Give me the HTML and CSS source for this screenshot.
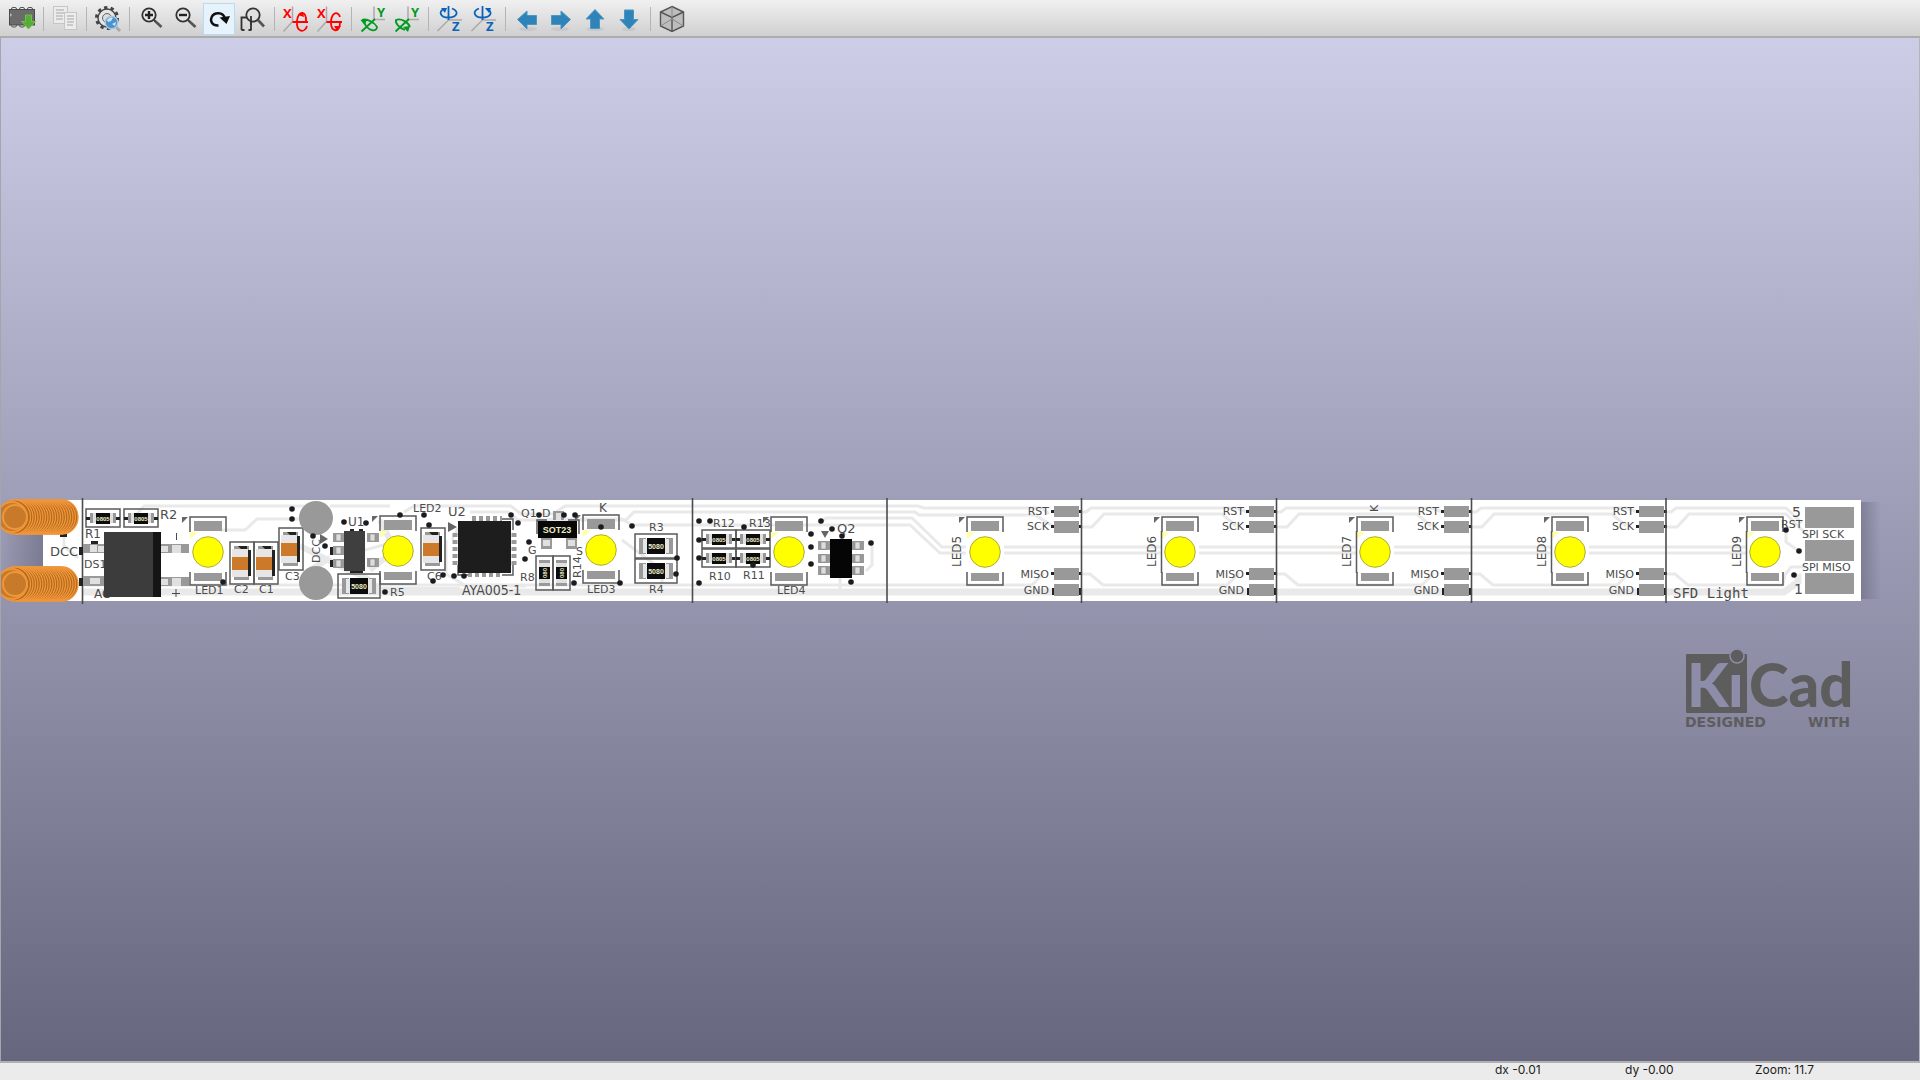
FILE: index.html
```html
<!DOCTYPE html>
<html lang="en">
<head>
  <meta charset="UTF-8">
  <title>3D Viewer</title>
  <link rel="stylesheet" href="styles.css">
</head>
<body>
  <div class="toolbar" role="toolbar">
    <button type="button" aria-label="Reload board">
      <svg viewBox="0 0 32 32"><g fill="none" stroke="#555"><rect x="5.5" y="4.5" width="5" height="5" rx="1.5"/><rect x="13.5" y="4.5" width="5" height="5" rx="1.5"/><rect x="21.5" y="4.5" width="5" height="5" rx="1.5"/><rect x="5.5" y="19" width="5" height="5" rx="1.5"/><rect x="13.5" y="19" width="5" height="5" rx="1.5"/></g><rect x="3.5" y="6.5" width="25" height="15.5" fill="#6b6b6b" stroke="#4a4a4a"/><path d="M4 10l2 2-2 2" fill="#bbb"/><path d="M19.5 12h6v6.5h4l-7 7.500-7-7.500h4z" fill="#56ad35" stroke="#6fc04d"/></svg>
    </button>
    <span class="sep"></span>
    <button type="button" aria-label="Copy image">
      <svg viewBox="0 0 32 32"><g fill="#ececec" stroke="#c6c6c6"><rect x="4.5" y="3.5" width="14" height="17"/><rect x="15.5" y="9.5" width="12" height="17"/></g><path d="M7 7h8M7 10h8M7 13h7M7 16h7M18 13h7M18 16h7M18 19h7M18 22h6" stroke="#bdbdbd" stroke-width="1.5"/></svg>
    </button>
    <span class="sep"></span>
    <button type="button" aria-label="Render settings">
      <svg viewBox="0 0 32 32"><circle cx="15" cy="15" r="10.5" fill="none" stroke="#444" stroke-width="3" stroke-dasharray="3.3 3.3"/><circle cx="15" cy="15" r="9" fill="#e6e6e6" stroke="#444" stroke-width="1.4"/><circle cx="15" cy="15" r="4.5" fill="#ddd" stroke="#666"/><path d="M23 23l5 5" stroke="#aaa" stroke-width="3"/><circle cx="19.5" cy="19.5" r="6.3" fill="#4b93cc" stroke="#a9c9e2" stroke-width="1.4"/><path d="M15 17q3-4 6-2l-2 3-3 1zM20 21l4-2-1 4z" fill="#cfe4f4"/></svg>
    </button>
    <span class="sep"></span>
    <button type="button" aria-label="Zoom in">
      <svg viewBox="0 0 32 32"><circle cx="14" cy="12" r="6.7" fill="#e6e6e6" stroke="#333" stroke-width="1.8"/><path d="M19 17l2 2" stroke="#333" stroke-width="2"/><path d="M20.5 18.5l6 5.5" stroke="#555" stroke-width="2.6"/><path d="M10 12h8M14 8v8" stroke="#222" stroke-width="2.4"/></svg>
    </button>
    <button type="button" aria-label="Zoom out">
      <svg viewBox="0 0 32 32"><circle cx="14" cy="12" r="6.7" fill="#e6e6e6" stroke="#333" stroke-width="1.8"/><path d="M19 17l2 2" stroke="#333" stroke-width="2"/><path d="M20.5 18.5l6 5.5" stroke="#555" stroke-width="2.6"/><path d="M10 12h8" stroke="#222" stroke-width="2.4"/></svg>
    </button>
    <button type="button" class="active" aria-label="Redraw">
      <svg viewBox="0 0 32 32"><path d="M15.5 22.5C9 23 7 18 8.5 14.5C10.5 9 20.5 8 22 16" fill="none" stroke="#111" stroke-width="2.4"/><path d="M16.5 14.5l10.5-1.5-3.5 8z" fill="#111"/></svg>
    </button>
    <button type="button" aria-label="Zoom to fit">
      <svg viewBox="0 0 32 32"><path d="M4.5 27V14.5h9.5V27M4.5 27h3M11.5 27h3" fill="none" stroke="#333" stroke-width="1.8"/><circle cx="16" cy="12" r="6.7" fill="#e0e0e0" stroke="#333" stroke-width="1.8"/><path d="M14 13v9" stroke="#333" stroke-width="1.8"/><path d="M21 17l6 6.5" stroke="#555" stroke-width="2.6"/></svg>
    </button>
    <span class="sep"></span>
    <button type="button" aria-label="Rotate X clockwise">
      <svg viewBox="0 0 32 32"><path d="M12.5 3.5v15l-9 10" class="axis"/><text x="3" y="15" class="axis-x">X</text><path d="M12.5 19H28M26 19c1-12-8-12-9-1c-1 12 8 12 10 5" class="rot red"/><path d="M18 12l5-3 1 5z" fill="#f00"/></svg>
    </button>
    <button type="button" aria-label="Rotate X counterclockwise">
      <svg viewBox="0 0 32 32"><path d="M12.5 3.5v15l-9 10" class="axis"/><text x="3" y="15" class="axis-x">X</text><path d="M12.5 19H28M26 14c-2-6-8-5-9 4c-1 12 9 12 9 2" class="rot red"/><path d="M20 23l7 0-4 5z" fill="#f00"/></svg>
    </button>
    <span class="sep"></span>
    <button type="button" aria-label="Rotate Y clockwise">
      <svg viewBox="0 0 32 32"><path d="M17 3.5v13h11" class="axis"/><text x="20" y="14" class="axis-y">Y</text><path d="M18 16L4.5 28.5M5 17c5-2 13 3 15 7c0 5-9 5-13-5" class="rot green"/><path d="M3.5 17l7-1-3 6z" fill="#009a20"/></svg>
    </button>
    <button type="button" aria-label="Rotate Y counterclockwise">
      <svg viewBox="0 0 32 32"><path d="M17 3.5v13h11" class="axis"/><text x="20" y="14" class="axis-y">Y</text><path d="M18 16L4.5 28.5M14 27c-6-2-10-7-9-10c5-2 12 2 14 7" class="rot green"/><path d="M12 24l7-1-2 6z" fill="#009a20"/></svg>
    </button>
    <span class="sep"></span>
    <button type="button" aria-label="Rotate Z clockwise">
      <svg viewBox="0 0 32 32"><path d="M28 17H14.5L3.5 28" class="axis"/><text x="18" y="28" class="axis-z">Z</text><path d="M14.5 3v14M11 5.5c-8 3-4 9 3 9c9 0 12-6 4-9" class="rot blue"/><path d="M7 5l6 0-2 5z" fill="#0a62bb"/></svg>
    </button>
    <button type="button" aria-label="Rotate Z counterclockwise">
      <svg viewBox="0 0 32 32"><path d="M28 17H14.5L3.5 28" class="axis"/><text x="18" y="28" class="axis-z">Z</text><path d="M14.5 3v14M11 5.5c-8 3-4 9 3 9c9 0 12-6 4-9" class="rot blue"/><path d="M17 5l6 0-2 5z" fill="#0a62bb"/></svg>
    </button>
    <span class="sep"></span>
    <button type="button" aria-label="Move left">
      <svg viewBox="0 0 32 32"><ellipse cx="17" cy="26" rx="9" ry="2" class="soft"/><path d="M6.5 16.5L16 8v4.5h9.500v9H16V26z" class="arrow"/></svg>
    </button>
    <button type="button" aria-label="Move right">
      <svg viewBox="0 0 32 32"><ellipse cx="15" cy="26" rx="9" ry="2" class="soft"/><path d="M25.5 16.5L16 8v4.5H6.5v9H16V26z" class="arrow"/></svg>
    </button>
    <button type="button" aria-label="Move up">
      <svg viewBox="0 0 32 32"><ellipse cx="16" cy="26" rx="9" ry="2" class="soft"/><path d="M16 6.5L25 16h-4.5v9.500h-9V16H7z" class="arrow"/></svg>
    </button>
    <button type="button" aria-label="Move down">
      <svg viewBox="0 0 32 32"><ellipse cx="16" cy="26" rx="7" ry="2" class="soft"/><path d="M16 26L25 16.5h-4.5V7h-9v9.500H7z" class="arrow"/></svg>
    </button>
    <span class="sep"></span>
    <button type="button" aria-label="Orthographic projection">
      <svg viewBox="0 0 32 32"><path d="M16 3.5l11.5 5.5v14L16 28.5 4.5 23V9z" fill="#bdbdbd" stroke="#555" stroke-width="1.4"/><path d="M4.5 9L16 14.5 27.5 9M16 14.5v14" fill="none" stroke="#555" stroke-width="1.4"/><path d="M16 3.5v12M4.5 23L16 16l11.5 7" fill="none" stroke="#8a8a8a"/></svg>
    </button>
  </div>

  <main class="viewport">
    <svg class="scene" viewBox="1 38 1918 1023">
      <defs>
        <linearGradient id="shade"><stop offset="0" stop-color="#66667f" stop-opacity=".55"/><stop offset="1" stop-color="#66667f" stop-opacity="0"/></linearGradient>
        <linearGradient id="shadeL"><stop offset="0" stop-color="#66667f" stop-opacity="0"/><stop offset="1" stop-color="#66667f" stop-opacity=".6"/></linearGradient>
        <g id="led">
          <path d="M-18 -20V-35H18V-20M-18 20V33H18V20" class="silk"/>
          <path d="M-26 -35h6l-6 6z" fill="#666"/>
          <rect x="-14" y="-31" width="28" height="10" class="pad"/>
          <rect x="-14" y="21" width="28" height="8" class="pad"/>
          <path d="M-18 -20h8l-8 7z" fill="#ffffa8"/>
          <circle r="15.3" fill="#ff0" stroke="#8a8a20" stroke-width=".7"/>
        </g>
        <g id="cap">
          <rect x="-12" y="-21" width="24" height="42" class="silk"/>
          <rect x="-8" y="-17" width="15" height="34" class="pad"/>
          <rect x="-10" y="-14" width="16" height="28" fill="#e6e6e6"/>
          <path d="M6 -13h3v26h-3zM-4 -17h9v3h-6z" fill="#222"/>
          <rect x="-10" y="-6" width="16" height="13" fill="#cc7a29"/>
        </g>
        <g id="res">
          <rect x="-17" y="-9" width="34" height="18" class="silk"/>
          <path d="M-13 -5h6V5h-6zM7 -5h6V5h-6z" class="pad"/>
          <path d="M-10 -5h3V5h-3zM7 -5h3V5h-3z" fill="#e0e0e0"/>
          <rect x="-7" y="-5" width="14" height="11" fill="#0c0c0c"/>
          <path d="M-17 -1h4v3h-4zM13 -1h4v3h-4z" fill="#222"/>
          <text x="0" y="3" class="chip small">0805</text>
        </g>
        <g id="bigres">
          <rect x="-21" y="-12" width="42" height="24" class="silk"/>
          <path d="M-17 -8h7V8h-7zM10 -8h7V8h-7z" class="pad"/>
          <path d="M-13 -7h4V7h-4zM9 -7h4V7h-4z" fill="#e6e6e6"/>
          <rect x="-9" y="-8" width="18" height="16" fill="#0c0c0c"/>
          <text x="0" y="3" class="chip">5080</text>
        </g>
        <g id="vres">
          <rect x="-9" y="-17" width="17" height="34" class="silk"/>
          <path d="M-6 -13h11v26h-11z" class="pad"/>
          <path d="M-6 -10h11v20h-11z" fill="#e0e0e0"/>
          <rect x="-6" y="-6" width="11" height="12" fill="#0c0c0c"/>
          <text transform="rotate(-90)" x="0" y="2" class="chip small">080</text>
        </g>
        <g id="leg"><rect width="12" height="9" class="pad"/><rect x="3" y="1" width="5" height="7" fill="#ddd" stroke="#888" stroke-width=".6"/></g>
      </defs>

      <rect x="1861" y="502" width="20" height="97" fill="url(#shade)"/>
      <rect x="1" y="500" width="42" height="101" fill="url(#shadeL)"/>
      <rect x="43" y="500" width="1818" height="101" fill="#fff"/>

      <!-- copper under the mask -->
      <g class="track">
        <path d="M64 536v10l14 12M82 585H1032l12-12M130 522l14-16h104"/>
        <path d="M220 530h25l12-11h45M248 506h60M330 506h60M365 550l22-6M404 512l10-6h97l10 8h32l12-8h353l6 2h118l7 6"/>
        <path d="M470 512h38l10 8h108l8-8h281l4 3h116l18 11"/>
        <path d="M540 525l12-6h70l10 6h186l8-7h86l30 29h836M640 525h270l30 28h816"/>
        <path d="M452 540l6-12M446 540v34l20 12h60M840 578v14M872 545v20l-6 6M622 540l40 30v15"/>
        <path d="M380 520l15 30-25 20M300 546l40 20 26 12 14 12h80M310 570l20-12" stroke-width="6"/>
      </g>
      <path d="M82 592H1784l14-10v-8" fill="none" stroke="#e9e9e9" stroke-width="7"/>
      <g id="modules"></g>
      <path d="M1786 530v12l13 9" class="track"/>
      <path d="M82.500 498V604M692.500 498V603M887 498V603M1081.500 498V603M1276.500 498V603M1471.500 498V603M1666 498V603" stroke="#4c4c4c" stroke-width="1.6"/>

      <!-- bridge rectifier and input -->
      <path d="M60 533h7v4h-7zM79 547h4v8h-4zM79 578h4v8h-4zM91 541h7v4h-7z" fill="#222"/>
      <text x="50" y="556" class="t13">DCC</text>
      <g id="coils"></g>
      <use href="#res" x="103" y="518"/><use href="#res" x="141" y="518"/>
      <text x="160" y="519" class="t13">R2</text>
      <text x="85" y="538" class="t12">R1</text>
      <text x="84" y="568">DS1</text>
      <text x="94" y="598" class="t12">AC</text>
      <path d="M83 544h21v9h-21zM83 576h21v10h-21zM160 544h29v9h-29zM160 577h29v9h-29z" class="pad"/>
      <path d="M90 545h7v7h-7zM98 546h6v6h-6zM90 578h10v6h-10zM161 546h7v6h-7zM172 545h9v8h-9zM161 579h7v6h-7zM172 578h9v8h-9z" fill="#e0e0e0"/>
      <rect x="104" y="532" width="50" height="65" fill="#3c3c3c"/>
      <rect x="153" y="532" width="8" height="65" fill="#141414"/>
      <path d="M176.500 533v7M172 593.500h8M176 589v8" stroke="#4c4c4c"/>

      <use href="#led" x="208" y="552"/>
      <use href="#cap" x="242" y="563"/><use href="#cap" x="266" y="563"/><use href="#cap" x="291" y="549"/><use href="#cap" x="433" y="549"/>
      <text x="195" y="594">LED1</text>
      <text x="234" y="593">C2</text><text x="259" y="593">C1</text><text x="285" y="580">C3</text><text x="427" y="580">C6</text>
      <circle cx="316" cy="518" r="17" class="pad"/><circle cx="316" cy="583" r="17" class="pad"/>
      <text transform="translate(320 563) rotate(-90)">DCC</text>
      <path d="M320 534l8 5-8 5z" fill="#666"/>

      <!-- regulator -->
      <use href="#leg" x="333" y="533"/><use href="#leg" x="333" y="546"/><use href="#leg" x="333" y="559"/><use href="#leg" x="367" y="533"/><use href="#leg" x="367" y="558"/>
      <path d="M330 547h3v8h-3zM330 560h3v7h-3zM350 529h4v3h-4zM359 529h4v3h-4zM350 570h13v3h-13z" fill="#222"/>
      <rect x="344" y="531" width="21" height="40" fill="#3f3f3f"/>
      <text x="348" y="526" class="t12">U1</text>
      <use href="#bigres" x="359" y="586"/>
      <text x="390" y="596">R5</text>
      <use href="#led" x="398" y="551"/>
      <text x="413" y="512">LED2</text>

      <!-- controller -->
      <text x="448" y="516" class="t13">U2</text>
      <path d="M448 522l9 5-9 5z" fill="#666"/>
      <path d="M502 519h11v11M458 565v10h11M502 575h11v-11" class="silk"/>
      <path d="M472 519h30M468 574h34" stroke="#999" stroke-width="6" stroke-dasharray="4 3"/>
      <path d="M455 533v32M514 533v32" stroke="#999" stroke-width="5" stroke-dasharray="4 3"/>
      <rect x="458" y="521" width="53" height="52" fill="#1d1d1d"/>
      <text x="462" y="595" class="part">AYA005-1</text>

      <text x="521" y="517">Q1</text><text x="542" y="517">D</text><text x="528" y="554">G</text><text x="576" y="555">S</text>
      <path d="M537 534v-14h10M568 520h11v14" class="silk"/>
      <path d="M553 511h11v9h-11zM541 538h11v11h-11zM566 538h11v11h-11z" class="pad"/>
      <path d="M556 513h5v7h-5zM543 540h7v6h-7zM568 540h7v6h-7z" fill="#e0e0e0"/>
      <rect x="538" y="521" width="39" height="17" fill="#080808"/>
      <text x="557" y="533" class="chip sot">SOT23</text>
      <use href="#vres" x="545" y="573"/><use href="#vres" x="562" y="573"/>
      <text x="520" y="581">R8</text>
      <text transform="translate(581 578) rotate(-90)">R14</text>
      <use href="#led" x="601" y="550"/>
      <text x="599" y="512" class="t12">K</text>
      <text x="587" y="593">LED3</text>
      <use href="#bigres" x="656" y="546"/><use href="#bigres" x="656" y="571"/>
      <text x="649" y="531">R3</text><text x="649" y="593">R4</text>

      <use href="#res" x="719" y="539"/><use href="#res" x="753" y="539"/><use href="#res" x="719" y="558"/><use href="#res" x="753" y="558"/>
      <text x="713" y="527">R12</text><text x="749" y="527">R13</text><text x="709" y="580">R10</text><text x="743" y="579">R11</text>
      <use href="#led" x="789" y="552"/>
      <text x="777" y="594">LED4</text>
      <path d="M821 531h8l-4 7z" fill="#666"/>
      <use href="#leg" x="818" y="541"/><use href="#leg" x="818" y="554"/><use href="#leg" x="818" y="566"/><use href="#leg" x="852" y="541"/><use href="#leg" x="852" y="554"/><use href="#leg" x="852" y="566"/>
      <rect x="830" y="539" width="22" height="39" fill="#050505"/>
      <text x="837" y="533" class="t13">Q2</text>
      <g id="vias" fill="#1b1b22"></g>

      <!-- programming pads -->
      <path d="M1805 507h49v21h-49zM1805 540h49v21h-49zM1805 573h49v21h-49z" class="pad"/>
      <text x="1792" y="517" class="t14">5</text>
      <text x="1781" y="528">RST</text>
      <text x="1802" y="538">SPI SCK</text>
      <text x="1802" y="571">SPI MISO</text>
      <text x="1794" y="594" class="t14">1</text>
      <text x="1673" y="598" class="title">SFD Light</text>

      <g class="logo">
        <rect x="1686" y="654" width="61" height="59" rx="1"/>
        <text x="1687" y="707" class="brand cut">K</text>
        <text x="1728" y="707" class="brand cut">ı</text>
        <circle cx="1737" cy="656" r="7" stroke="#8e8da9" stroke-width="1.5"/>
        <text x="1749" y="707" class="brand">Cad</text>
        <text x="1685" y="727" class="made">DESIGNED</text>
        <text x="1850" y="727" class="made end">WITH</text>
      </g>
    </svg>
  </main>

  <footer class="statusbar">
    <span></span>
    <span>dx -0.01</span>
    <span>dy -0.00</span>
    <span>Zoom: 11.7</span>
  </footer>

  <script>
    // strip sections, one LED each
    const pitch = 195;
    let out = "";
    for (let i = 0; i < 5; i++) {
      const x = i * pitch;
      out += `<g transform="translate(${x} 0)">`;
      if (i > 0) {
        out += `<path class="track" d="M887 512h4l5-4h${i === 4 ? "110l16 15" : "145l12 4"}M887 527h10l12-13h${i === 4 ? "97l24 24" : "118l14 12"}M887 574h8l13 11h${i === 4 ? "95l2-10l6-8h16" : "124l12-12"}"/>`;
      }
      if (i < 4) {
        out += `<path class="pad" d="M1054 506h25v11h-25zM1054 521h25v12h-25zM1054 568h25v12h-25zM1054 584h25v12h-25z"/>
          <path fill="#222" d="M1051 510h3v3h-3zM1079 510h3v3h-3zM1051 525h3v3h-3zM1079 525h3v3h-3zM1051 572h3v3h-3zM1079 572h3v3h-3zM1052 588h2v7h-2zM1079 588h2v7h-2z"/>
          <text x="1049" y="515" class="end">RST</text>
          <text x="1049" y="530" class="end">SCK</text>
          <text x="1049" y="578" class="end">MISO</text>
          <text x="1049" y="594" class="end">GND</text>`;
      }
      out += `<path d="M966 531h38v42h-38z" fill="#fff"/><use href="#led" x="985" y="552"/>`;
      if (i > 0) out += `<path d="M966.5 531v42" class="silk"/>`;
      out += `<text transform="translate(961 567) rotate(-90)" class="t12">LED${i + 5}</text></g>`;
    }
    out += `<text transform="translate(1378 512) rotate(-90)">K</text>`;
    document.getElementById("modules").innerHTML = out;

    // pickup springs
    let coils = "";
    for (const y of [517, 584]) {
      for (let x = 62; x > 12; x -= 2.5) {
        coils += `<ellipse cx="${x}" cy="${y}" rx="16" ry="17" class="coil"/>`;
      }
      for (let r = 15; r > 9; r -= 3) {
        coils += `<circle cx="${27 - r}" cy="${y}" r="${r}" class="coil first"/>`;
      }
    }
    document.getElementById("coils").innerHTML = coils;

    const vias = [
      [292, 509], [292, 519], [313, 536], [325, 546], [344, 522], [366, 523], [400, 515], [424, 515], [429, 525],
      [223, 582], [385, 592], [433, 581], [443, 575], [454, 576], [464, 576], [511, 515], [518, 523], [529, 542],
      [525, 559], [539, 515], [564, 515], [575, 515], [574, 583], [620, 583], [632, 526], [677, 558], [676, 574],
      [601, 527], [699, 521], [710, 521], [699, 540], [699, 558], [699, 583], [744, 527], [753, 565], [821, 521],
      [811, 534], [811, 547], [811, 564], [832, 529], [842, 536], [871, 543], [851, 582],
      [1786, 530], [1799, 551], [1794, 575]
    ];
    document.getElementById("vias").innerHTML =
      vias.map(([x, y]) => `<circle cx="${x}" cy="${y}" r="2.8"/>`).join("");
  </script>
</body>
</html>
```
FILE: styles.css
```css
* { box-sizing: border-box; }

body {
  margin: 0;
  height: 100vh;
  display: flex;
  flex-direction: column;
  background: #ebebeb;
  font-family: Inter, "Open Sans", sans-serif;
}

.toolbar {
  display: flex;
  align-items: center;
  gap: 2px;
  height: 38px;
  padding: 2px 6px 0;
  background: linear-gradient(#f0f0f0, #d0d0d0);
  border-bottom: 2px solid #acaca9;
}
.toolbar button {
  width: 32px;
  height: 32px;
  padding: 0;
  border: 0;
  background: none;
}
.toolbar button.active {
  background: #e6f3fd;
  box-shadow: inset 0 0 0 1px #b4dcf6;
}
.toolbar svg { display: block; width: 32px; height: 32px; }
.sep { width: 7px; height: 24px; background: linear-gradient(#b4b4b4, #b4b4b4) center / 1px 100% no-repeat; }

.axis { fill: none; stroke: #aaa; stroke-width: 1.5; }
.rot { fill: none; stroke-width: 1.8; }
.red { stroke: #f00; }
.green { stroke: #009a20; }
.blue { stroke: #0a62bb; }
.axis-x, .axis-y, .axis-z { font: bold 13px "Open Sans", sans-serif; }
.axis-x { fill: #f00; }
.axis-y { fill: #009a20; }
.axis-z { fill: #0a62bb; }
.arrow { fill: #2f83b9; stroke: #4a97c6; }
.soft { fill: #bbb; opacity: .5; }

.viewport {
  flex: 1;
  min-height: 0;
  background: linear-gradient(#cdcde7, #66667f);
  border-left: 1px solid #a5a5ae;
  border-right: 1px solid #b5b5b5;
}
.scene { display: block; width: 100%; height: 100%; }
.scene text { font-family: "DejaVu Sans", sans-serif; font-size: 11px; fill: #4c4c4c; }
.scene .t12 { font-size: 12px; }
.scene .t13 { font-size: 13px; }
.scene .t14 { font-size: 14px; }
.scene .title { font-family: "DejaVu Sans Mono", monospace; font-size: 14px; }
.scene .part { font-family: "DejaVu Sans Condensed", "DejaVu Sans", sans-serif; font-size: 14px; }
.scene .end { text-anchor: end; }
.scene .chip { font: bold 7px "Liberation Sans", sans-serif; fill: #eeeec8; text-anchor: middle; }
.scene .small { font-size: 6px; }
.scene .sot { font-size: 9px; }

.silk { fill: none; stroke: #5a5a5a; stroke-width: 1.5; }
.pad { fill: #999; }
.track { fill: none; stroke: #e9e9e9; stroke-width: 3; }
.coil { fill: #b36a1c; stroke: #f0963a; stroke-width: 1.3; }
.first { fill: #c67a2a; stroke-width: 2; }

.logo { fill: #5d5d5d; }
.scene .brand { font: 900 60px Lato, sans-serif; fill: #5d5d5d; }
.scene .cut { fill: #8e8da9; }
.scene .made { font-weight: bold; font-size: 14px; fill: #5d5d5d; }

.statusbar {
  display: grid;
  grid-template-columns: 1fr 130px 130px 165px;
  height: 19px;
  line-height: 14px;
  border-top: 2px solid #b0b0b0;
  background: #ebebeb;
  font-size: 12px;
  color: #1c1c1c;
}
```
